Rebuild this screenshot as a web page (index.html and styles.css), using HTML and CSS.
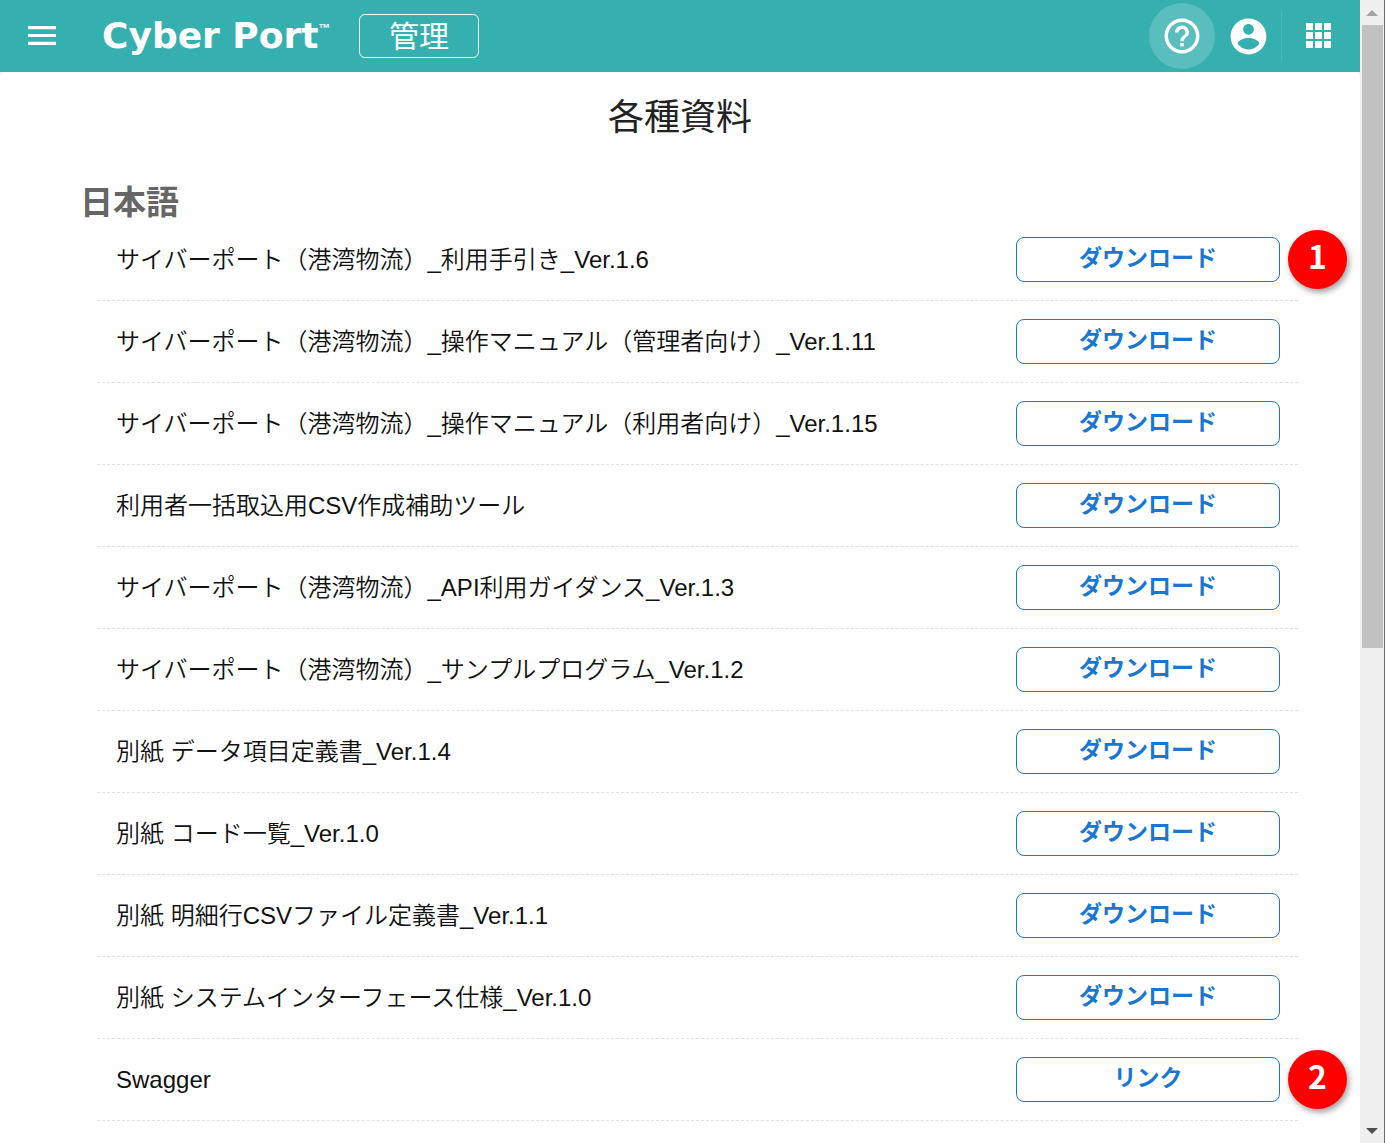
FILE: index.html
```html
<!DOCTYPE html>
<html lang="ja">
<head>
    <meta charset="UTF-8">
    <meta name="viewport" content="width=device-width, initial-scale=1.0">
    <title>各種資料</title>
    <link rel="stylesheet" href="styles.css">
</head>
<body>
    <div class="app">
        <header class="header">
            <button type="button" class="icon-button menu-button" aria-label="メニュー">
                <svg viewBox="3 6 18 12" width="28" height="19" preserveAspectRatio="none"><path d="M3 18h18v-2H3v2zm0-5h18v-2H3v2zm0-7v2h18V6H3z"/></svg>
            </button>
            <a href="#" class="logo">Cyber Port<span class="tm">™</span></a>
            <button type="button" class="admin-button">管理</button>
            <div class="header-actions">
                <button type="button" class="icon-button help-button" aria-label="ヘルプ">
                    <svg viewBox="0 0 24 24" width="42" height="42"><path d="M11 18h2v-2h-2v2zm1-16C6.48 2 2 6.48 2 12s4.480 10 10 10 10-4.480 10-10S17.520 2 12 2zm0 18c-4.410 0-8-3.590-8-8s3.590-8 8-8 8 3.590 8 8-3.590 8-8 8zm0-14c-2.210 0-4 1.790-4 4h2c0-1.100.9-2 2-2s2 .9 2 2c0 2-3 1.750-3 5h2c0-2.250 3-2.500 3-5 0-2.210-1.790-4-4-4z"/></svg>
                </button>
                <button type="button" class="icon-button account-button" aria-label="アカウント">
                    <svg viewBox="0 0 24 24" width="43" height="43"><path d="M12 2C6.480 2 2 6.480 2 12s4.480 10 10 10 10-4.480 10-10S17.520 2 12 2zm0 3c1.660 0 3 1.340 3 3s-1.340 3-3 3-3-1.340-3-3 1.340-3 3-3zm0 14.200c-2.500 0-4.710-1.280-6-3.220.03-1.990 4-3.080 6-3.080 1.990 0 5.970 1.090 6 3.080-1.290 1.940-3.500 3.220-6 3.220z"/></svg>
                </button>
                <button type="button" class="icon-button apps-button" aria-label="アプリ">
                    <svg viewBox="0 0 25 25" width="25" height="25"><path d="M0 0h7v7H0zM9 0h7v7H9zM18 0h7v7h-7zM0 9h7v7H0zM9 9h7v7H9zM18 9h7v7h-7zM0 18h7v7H0zM9 18h7v7H9zM18 18h7v7h-7z"/></svg>
                </button>
            </div>
        </header>
        <main class="content">
            <h1>各種資料</h1>
            <h2>日本語</h2>
            <ul class="document-list">
                <li>
                    <span>サイバーポート（港湾物流）_利用手引き_Ver.1.6</span>
                    <button type="button" class="action-button">ダウンロード</button>
                    <span class="badge">1</span>
                </li>
                <li>
                    <span>サイバーポート（港湾物流）_操作マニュアル（管理者向け）_Ver.1.11</span>
                    <button type="button" class="action-button">ダウンロード</button>
                </li>
                <li>
                    <span>サイバーポート（港湾物流）_操作マニュアル（利用者向け）_Ver.1.15</span>
                    <button type="button" class="action-button">ダウンロード</button>
                </li>
                <li>
                    <span>利用者一括取込用CSV作成補助ツール</span>
                    <button type="button" class="action-button">ダウンロード</button>
                </li>
                <li>
                    <span>サイバーポート（港湾物流）_API利用ガイダンス_Ver.1.3</span>
                    <button type="button" class="action-button">ダウンロード</button>
                </li>
                <li>
                    <span>サイバーポート（港湾物流）_サンプルプログラム_Ver.1.2</span>
                    <button type="button" class="action-button">ダウンロード</button>
                </li>
                <li>
                    <span>別紙 データ項目定義書_Ver.1.4</span>
                    <button type="button" class="action-button">ダウンロード</button>
                </li>
                <li>
                    <span>別紙 コード一覧_Ver.1.0</span>
                    <button type="button" class="action-button">ダウンロード</button>
                </li>
                <li>
                    <span>別紙 明細行CSVファイル定義書_Ver.1.1</span>
                    <button type="button" class="action-button">ダウンロード</button>
                </li>
                <li>
                    <span>別紙 システムインターフェース仕様_Ver.1.0</span>
                    <button type="button" class="action-button">ダウンロード</button>
                </li>
                <li>
                    <span>Swagger</span>
                    <a href="#" class="action-button">リンク</a>
                    <span class="badge">2</span>
                </li>
            </ul>
        </main>
    </div>
    <div class="scrollbar" aria-hidden="true">
        <div class="arrow arrow-up"></div>
        <div class="track"><div class="thumb"></div></div>
        <div class="arrow arrow-down"></div>
    </div>
</body>
</html>
```
FILE: styles.css
```css
* {
    box-sizing: border-box;
}
body {
    display: flex;
    min-height: 100vh;
    margin: 0;
    background-color: #f0f0f0;
    font-family: "Liberation Sans", "Noto Sans CJK JP", sans-serif;
    font-size: 24px;
    font-weight: 350;
    color: #111;
}
.app {
    flex: 1;
    display: flex;
    flex-direction: column;
    min-width: 0;
}

/* header */
.header {
    display: flex;
    align-items: center;
    height: 72px;
    padding: 0 12px;
    background-color: #35b0af;
    color: #fff;
}
.icon-button {
    display: flex;
    align-items: center;
    justify-content: center;
    padding: 0;
    border: none;
    background: none;
    cursor: pointer;
}
.icon-button svg {
    fill: #fff;
}
.menu-button {
    width: 60px;
    height: 60px;
    padding-bottom: 1px;
}
.logo {
    display: flex;
    width: 256px;
    margin-left: 30px;
    color: #fff;
    font-family: "DejaVu Sans", sans-serif;
    font-size: 36px;
    font-weight: bold;
    line-height: 40px;
    text-decoration: none;
    white-space: nowrap;
}
.tm {
    font-family: "Liberation Sans", sans-serif;
    font-size: 12px;
    line-height: 24px;
}
.admin-button {
    width: 120px;
    height: 44px;
    margin-left: 1px;
    padding: 0 0 4px;
    border: 1px solid #fff;
    border-radius: 6px;
    background: none;
    color: #fff;
    font-family: "Noto Sans CJK JP", sans-serif;
    font-size: 30px;
    font-weight: 400;
    line-height: 38px;
    cursor: pointer;
}
.header-actions {
    display: flex;
    align-items: center;
    margin-left: auto;
}
.help-button {
    width: 66px;
    height: 66px;
    border-radius: 50%;
    background-color: rgba(255, 255, 255, 0.18);
}
.account-button {
    width: 66px;
    height: 66px;
}
.apps-button {
    width: 67px;
    height: 48px;
    padding: 0 0 1px 6px;
    border-left: 1px solid rgba(255, 255, 255, 0.12);
}

/* document list */
.content {
    flex: 1;
    padding: 22px 62px 22px 80px;
    border-radius: 5px 5px 0 0;
    background-color: #fff;
}
h1 {
    margin: 0 -1px 0 -19px;
    font-size: 36px;
    font-weight: 400;
    line-height: 48px;
    text-align: center;
    color: #222;
}
h2 {
    margin: 44px 0 0;
    font-size: 33px;
    font-weight: bold;
    line-height: 33px;
    color: #666;
}
.document-list {
    margin: 0 0 0 17px;
    padding: 0;
    list-style: none;
    line-height: 28px;
}
.document-list li {
    position: relative;
    display: flex;
    align-items: center;
    justify-content: space-between;
    height: 82px;
    padding: 0 18px 0 19px;
    border-bottom: 1px dashed #e0e0e0;
}
.action-button {
    flex: none;
    width: 264px;
    height: 45px;
    padding: 0 0 7px;
    border: 1px solid #1976d2;
    border-radius: 8px;
    background-color: #fff;
    color: #1976d2;
    font-family: "Noto Sans CJK JP", sans-serif;
    font-size: 23px;
    font-weight: bold;
    line-height: 36px;
    text-align: center;
    text-decoration: none;
    cursor: pointer;
}
.badge {
    position: absolute;
    top: 11px;
    right: -49px;
    width: 59px;
    height: 59px;
    border-radius: 50%;
    background-color: #f00;
    box-shadow: 2px 3px 6px rgba(0, 0, 0, 0.4);
    color: #fff;
    font-family: "Noto Sans CJK JP", sans-serif;
    font-size: 32px;
    font-weight: bold;
    line-height: 50px;
    text-align: center;
}

/* scrollbar */
.scrollbar {
    display: flex;
    flex-direction: column;
    align-items: center;
    width: 25px;
    border-right: 1px solid #6b6b6b;
    background-color: #f0f0f0;
}
.arrow {
    display: flex;
    align-items: center;
    justify-content: center;
    height: 25px;
}
.arrow::before {
    content: "";
    border: 6px solid transparent;
}
.arrow-up::before {
    border-top: none;
    border-bottom-color: #a3a3a3;
}
.arrow-down::before {
    border-bottom: none;
    border-top-color: #505050;
}
.track {
    flex: 1;
    width: 21px;
}
.thumb {
    height: 57%;
    background-color: #c1c1c1;
}
```
